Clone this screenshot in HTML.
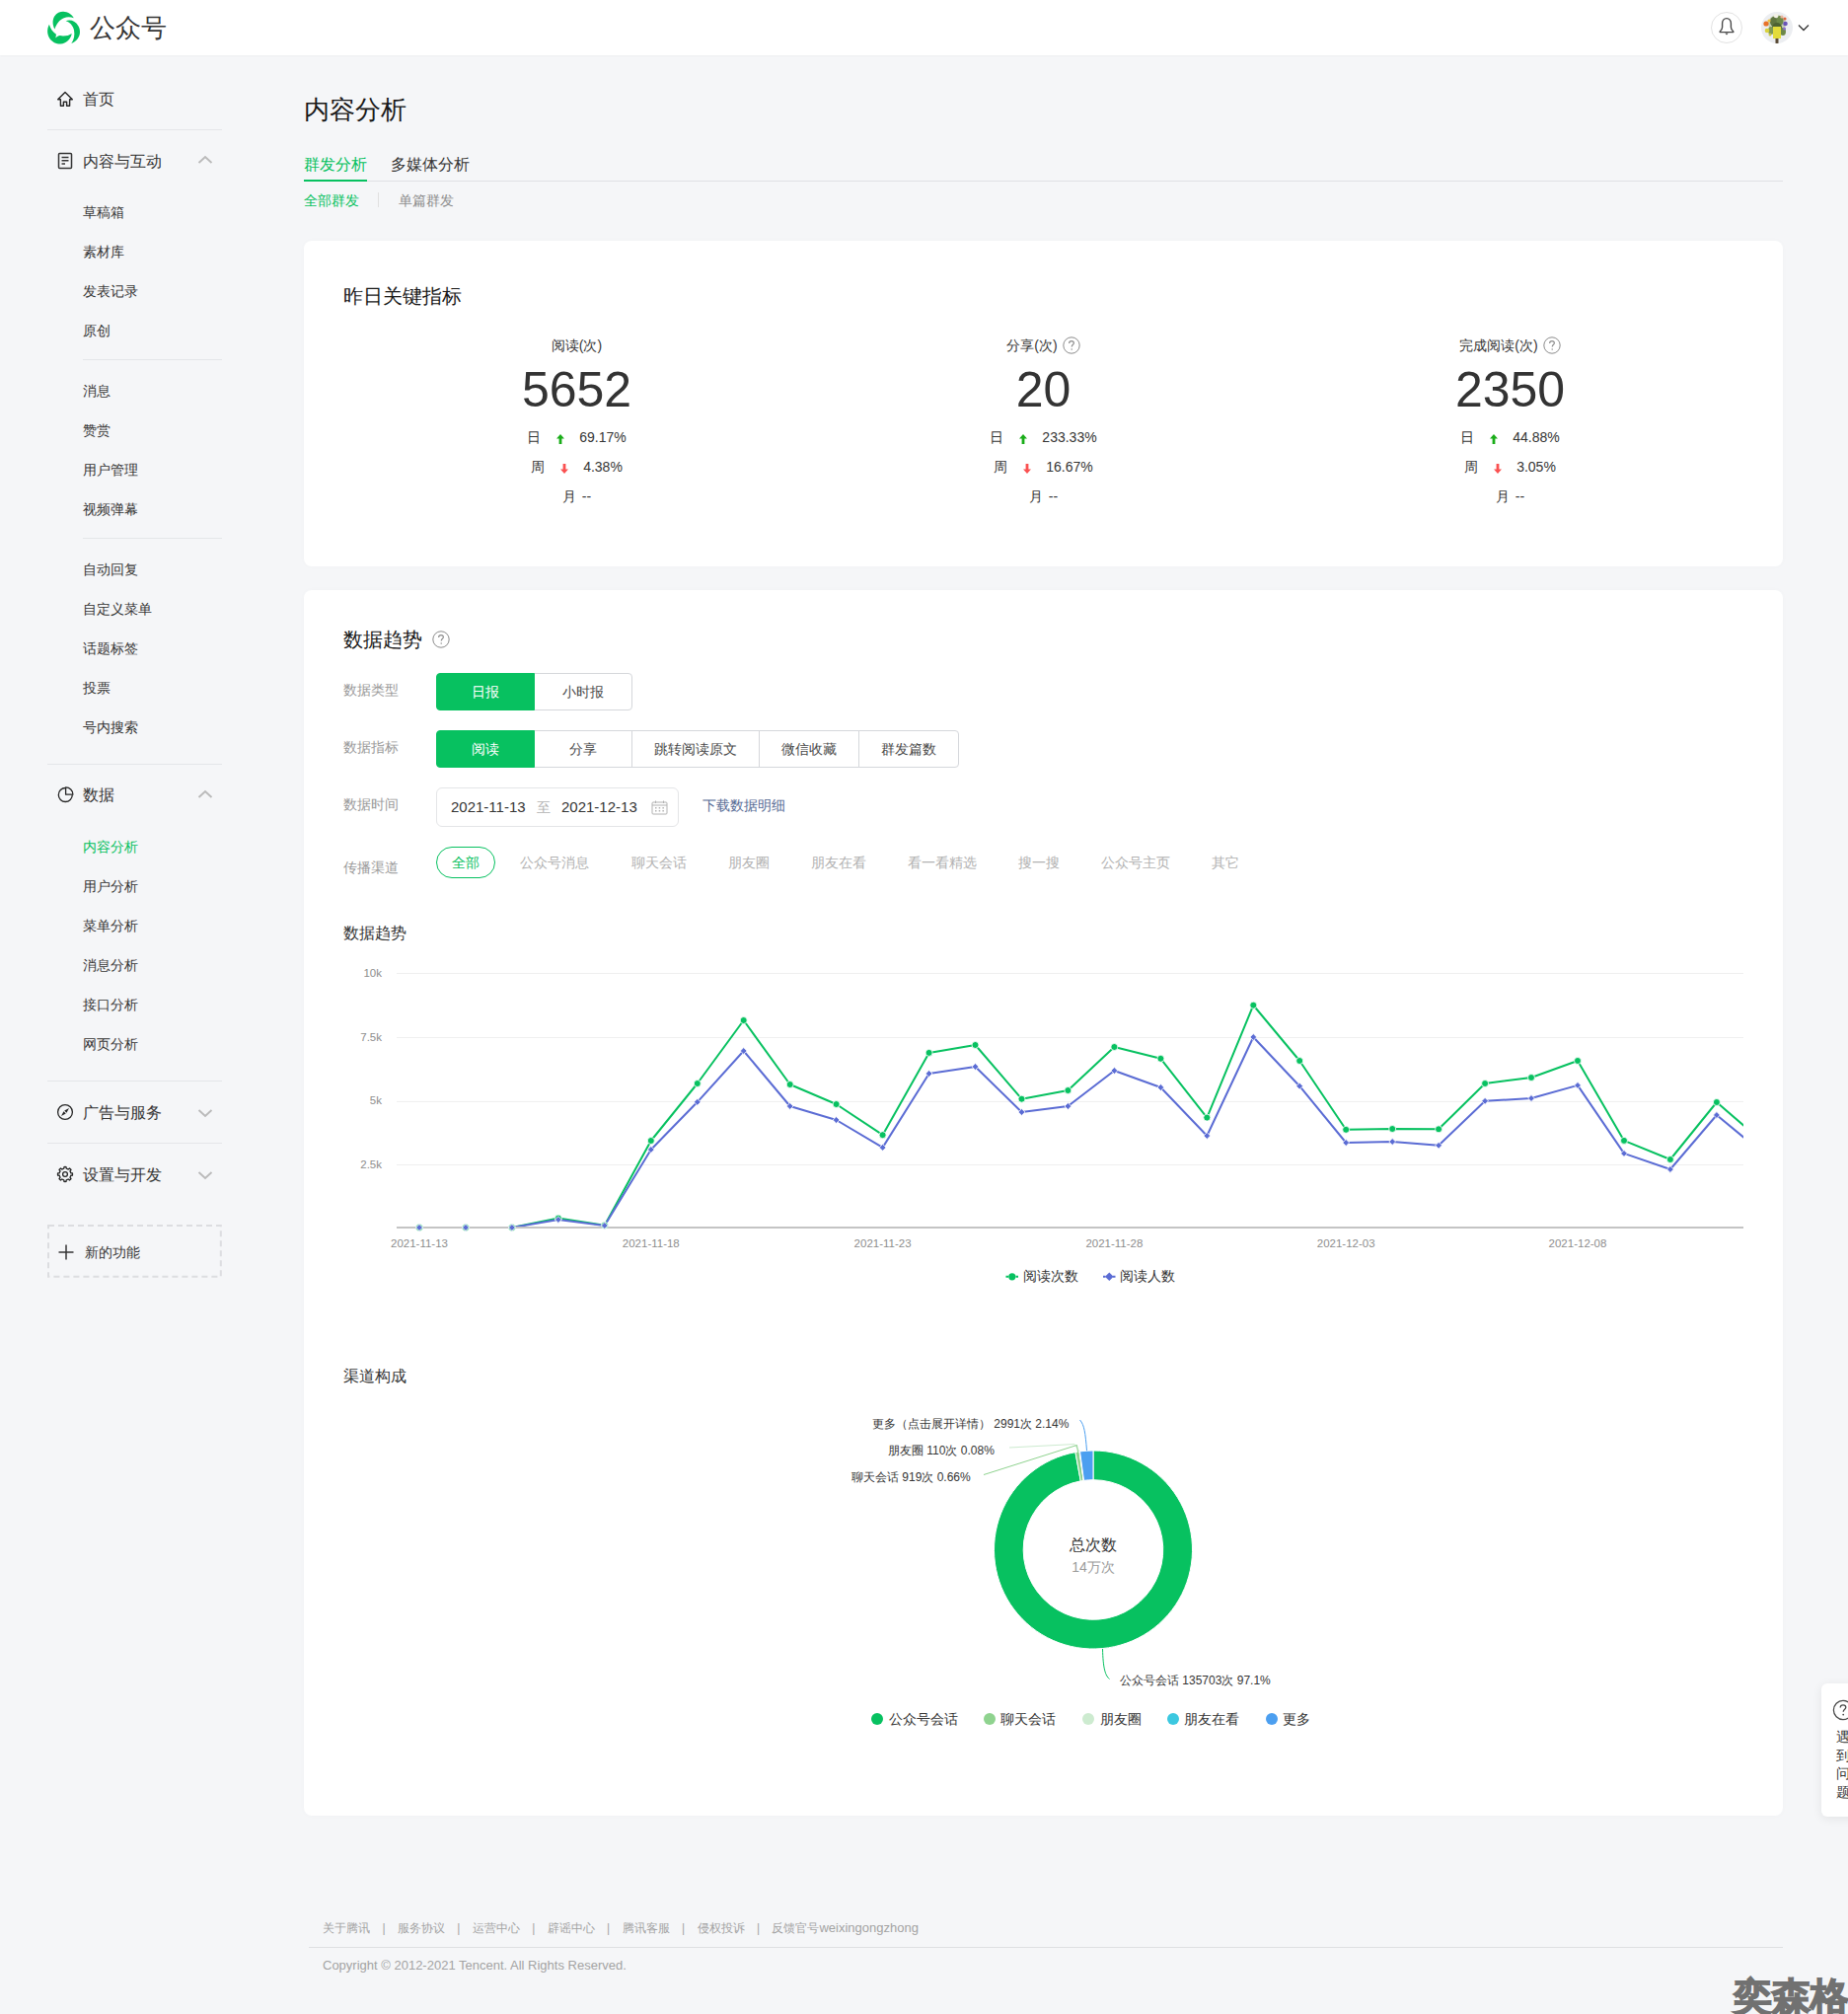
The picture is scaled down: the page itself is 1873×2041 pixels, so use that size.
<!DOCTYPE html>
<html><head><meta charset="utf-8">
<style>
*{box-sizing:border-box;margin:0;padding:0}
html,body{width:1873px;height:2041px;overflow:hidden}
body{position:relative;background:#f5f6f8;font-family:"Liberation Sans",sans-serif;color:#353535}
.abs{position:absolute}
.hdr{position:absolute;left:0;top:0;width:1873px;height:56px;background:#fff;box-shadow:0 1px 2px rgba(0,0,0,0.03)}
.t{position:absolute;white-space:nowrap;line-height:1}
.side .it{position:absolute;left:84px;font-size:14px;color:#353535;white-space:nowrap;line-height:20px}
.side .grp{position:absolute;left:84px;font-size:16px;color:#353535;white-space:nowrap;line-height:20px}
.side .dv{position:absolute;height:1px;background:#e4e6e9}
.card{position:absolute;left:308px;width:1499px;background:#fff;border-radius:8px;box-shadow:0 0 6px rgba(0,0,0,0.02)}

.mcol{position:absolute;top:0;width:473px;text-align:center}
.mlab{position:absolute;left:0;width:473px;top:340px;font-size:14px;line-height:20px;color:#353535;text-align:center;white-space:nowrap}
.mnum{position:absolute;left:0;width:473px;top:365px;font-size:50px;line-height:60px;color:#333;text-align:center}
.mrow{position:absolute;left:0;width:473px;font-size:14px;line-height:20px;color:#353535;display:flex;justify-content:center;align-items:center;white-space:nowrap}
.qi{display:inline-block;vertical-align:middle}
.up,.dn{display:inline-block;width:8px;height:10px;margin:0 15px 0 16px;position:relative;top:2px}

.lbl{position:absolute;left:348px;font-size:14px;line-height:20px;color:#9a9a9a;white-space:nowrap}
.bg{position:absolute;left:442px;height:38px;display:flex;font-size:14px;color:#4a4a4a}
.bg div{height:38px;line-height:36px;text-align:center;border:1px solid #d5d7db;margin-left:-1px;background:#fff}
.bg div:first-child{margin-left:0;border-radius:4px 0 0 4px}
.bg div:last-child{border-radius:0 4px 4px 0}
.bg div.on{background:#07c160;border-color:#07c160;color:#fff;position:relative;z-index:1}
.ch{position:absolute;top:864px;font-size:14px;line-height:20px;color:#b2b2b2;white-space:nowrap}
</style></head><body>

<div class="hdr">
 <svg class="abs" style="left:46px;top:10px" width="38" height="36" viewBox="0 0 38 36"><g fill="#07c160">
<path d="M9.46 19.5 C7.3 15.5 6.8 10.5 9.2 6.5 C11.5 3.2 15 1.8 18.1 1.85 C22.5 1.9 26.5 4.3 28.8 8.2 C25.5 7.2 22 7.0 18.8 8.2 C14.5 9.8 11.2 14 9.46 19.5 Z"/>
<path d="M20.6 11.3 C25 9.5 30.5 11 33.5 16.5 C35.8 20.5 35.5 26 32.5 29.5 C30.8 31.8 28.6 33.3 26.3 33.9 C29 30.5 30 25.5 29 20.5 C28 16 24.8 12.5 20.6 11.3 Z"/>
<path d="M3.9 14.8 C1.6 19 1.5 24.5 4.2 28.8 C7 33 11 34.6 15.4 34.5 C21 34.3 25.8 30 26.7 24.1 C24.5 25.8 21.5 26.6 18 26.6 C16.8 26.6 15.8 26.2 14.8 26.1 C13.2 26.4 11.8 27.3 10.3 28.4 C10.6 27 11 25.6 10.9 24.7 C7.5 22.5 5 19 3.9 14.8 Z"/>
</g></svg>
 <div class="t" style="left:91px;top:15px;font-size:26px;line-height:26px;color:#353535">公众号</div>
 <div class="abs" style="left:1734px;top:12px;width:32px;height:32px;border:1px solid #e2e2e2;border-radius:50%"></div>
 <svg class="abs" style="left:1742px;top:17px" width="16" height="20" viewBox="0 0 16 20"><path d="M8 1.6 C5.2 1.6 3.6 3.9 3.6 6.8 L3.6 10.6 C3.6 12.3 2.6 13.7 1.2 15 L1.2 15.6 L14.8 15.6 L14.8 15 C13.4 13.7 12.4 12.3 12.4 10.6 L12.4 6.8 C12.4 3.9 10.8 1.6 8 1.6 Z" fill="none" stroke="#4a4a4a" stroke-width="1.4" stroke-linejoin="round"/><path d="M6.3 16.4 L9.7 16.4 L8 18.4 Z" fill="#4a4a4a"/></svg>
 <svg class="abs" style="left:1785px;top:12px" width="32" height="32" viewBox="0 0 32 32">
<defs><clipPath id="av"><circle cx="16" cy="16" r="16"/></clipPath><filter id="bl"><feGaussianBlur stdDeviation="0.6"/></filter></defs>
<g clip-path="url(#av)"><rect width="32" height="32" fill="#eceef1"/>
<g filter="url(#bl)">
<ellipse cx="16" cy="12" rx="9" ry="9" fill="#a9b98a" opacity="0.6"/>
<ellipse cx="13" cy="10" rx="4" ry="5" fill="#5f7440"/>
<ellipse cx="19" cy="9" rx="3.5" ry="5" fill="#6e8a4a"/>
<ellipse cx="16" cy="16" rx="5" ry="5" fill="#4d6232"/>
<ellipse cx="10" cy="19" rx="3" ry="4" fill="#7f9a55"/>
<ellipse cx="22" cy="20" rx="3" ry="4" fill="#6d8848"/>
<circle cx="15" cy="4" r="2.2" fill="#f3f1e6"/>
<circle cx="21" cy="5" r="1.6" fill="#e9b6a0"/>
<circle cx="5" cy="12" r="2.6" fill="#e8722a"/>
<circle cx="8" cy="9" r="1.6" fill="#f0c040"/>
<circle cx="24.5" cy="12" r="2.3" fill="#6b55b8"/>
<circle cx="23.5" cy="17" r="1.5" fill="#8c6fd0"/>
<circle cx="24" cy="7" r="1.6" fill="#e0643c"/>
<circle cx="6" cy="19" r="2.3" fill="#d9d23c"/>
<circle cx="9" cy="23" r="1.5" fill="#c8c640"/>
</g>
<rect x="12" y="15" width="8" height="12" fill="#e3dc3a"/>
<rect x="14.5" y="27" width="3" height="5" fill="#5a4a34"/>
</g></svg>
<svg class="abs" style="left:1822px;top:24px" width="12" height="8" viewBox="0 0 12 8"><path d="M1 1.5 L6 6.5 L11 1.5" fill="none" stroke="#353535" stroke-width="1.3"/></svg>
</div>

<div class="side">
<svg class="abs" style="left:57px;top:92px" width="18" height="17" viewBox="0 0 18 17"><path d="M9 1.5 L16.3 8.7 L13.6 8.7 L13.6 15.2 L10.6 15.2 L10.6 11.3 L7.4 11.3 L7.4 15.2 L4.4 15.2 L4.4 8.7 L1.7 8.7 Z" fill="none" stroke="#262626" stroke-width="1.4" stroke-linejoin="round"/></svg>
<div class="grp" style="top:90.5px">首页</div>
<div class="dv" style="top:131px;left:48px;width:177px"></div>
<svg class="abs" style="left:58px;top:154px" width="16" height="18" viewBox="0 0 16 18"><rect x="1.5" y="1.5" width="13" height="15" rx="1" fill="none" stroke="#353535" stroke-width="1.5"/><path d="M4.5 5.5 H11.5 M4.5 8.8 H11.5 M4.5 12 H8" stroke="#353535" stroke-width="1.5"/></svg>
<div class="grp" style="top:153.5px">内容与互动</div>
<svg class="abs" style="left:200px;top:157px" width="16" height="10" viewBox="0 0 16 10"><path d="M1.5 8 L8 2 L14.5 8" fill="none" stroke="#bababa" stroke-width="1.9"/></svg>
<div class="it" style="top:205px;color:#353535">草稿箱</div>
<div class="it" style="top:245px;color:#353535">素材库</div>
<div class="it" style="top:285px;color:#353535">发表记录</div>
<div class="it" style="top:325px;color:#353535">原创</div>
<div class="dv" style="top:364px;left:84px;width:141px"></div>
<div class="it" style="top:386px;color:#353535">消息</div>
<div class="it" style="top:426px;color:#353535">赞赏</div>
<div class="it" style="top:466px;color:#353535">用户管理</div>
<div class="it" style="top:506px;color:#353535">视频弹幕</div>
<div class="dv" style="top:545px;left:84px;width:141px"></div>
<div class="it" style="top:567px;color:#353535">自动回复</div>
<div class="it" style="top:607px;color:#353535">自定义菜单</div>
<div class="it" style="top:647px;color:#353535">话题标签</div>
<div class="it" style="top:687px;color:#353535">投票</div>
<div class="it" style="top:727px;color:#353535">号内搜索</div>
<div class="dv" style="top:774px;left:48px;width:177px"></div>
<svg class="abs" style="left:57px;top:796px" width="18" height="18" viewBox="0 0 18 18"><path d="M9.3 2.5 A7 7 0 1 0 16.3 9.5" fill="none" stroke="#262626" stroke-width="1.3"/><path d="M9.6 1.9 V9.2 H16.9 A7.3 7.3 0 0 0 9.6 1.9 Z" fill="none" stroke="#262626" stroke-width="1.3" stroke-linejoin="round"/></svg>
<div class="grp" style="top:796px">数据</div>
<svg class="abs" style="left:200px;top:800px" width="16" height="10" viewBox="0 0 16 10"><path d="M1.5 8 L8 2 L14.5 8" fill="none" stroke="#bababa" stroke-width="1.9"/></svg>
<div class="it" style="top:848px;color:#07c160">内容分析</div>
<div class="it" style="top:888px;color:#353535">用户分析</div>
<div class="it" style="top:928px;color:#353535">菜单分析</div>
<div class="it" style="top:968px;color:#353535">消息分析</div>
<div class="it" style="top:1008px;color:#353535">接口分析</div>
<div class="it" style="top:1048px;color:#353535">网页分析</div>
<div class="dv" style="top:1095px;left:48px;width:177px"></div>
<svg class="abs" style="left:57px;top:1118px" width="18" height="18" viewBox="0 0 18 18"><circle cx="9" cy="9" r="7.4" fill="none" stroke="#262626" stroke-width="1.3"/><path d="M13 5 L10.48 9.78 L8.22 7.52 Z M5 13 L9.78 10.48 L7.52 8.22 Z" fill="#262626"/></svg>
<div class="grp" style="top:1117.5px">广告与服务</div>
<svg class="abs" style="left:200px;top:1122.5px" width="16" height="10" viewBox="0 0 16 10"><path d="M1.5 2 L8 8 L14.5 2" fill="none" stroke="#bababa" stroke-width="1.9"/></svg>
<div class="dv" style="top:1158px;left:48px;width:177px"></div>
<svg class="abs" style="left:57px;top:1181px" width="18" height="18" viewBox="0 0 18 18"><path d="M6.74 3.55 A5.9 5.9 0 0 1 7.77 3.23 L7.96 1.57 A7.5 7.5 0 0 1 10.04 1.57 L10.23 3.23 A5.9 5.9 0 0 1 11.26 3.55 A5.9 5.9 0 0 1 12.21 4.05 L13.51 3.01 A7.5 7.5 0 0 1 14.99 4.49 L13.95 5.79 A5.9 5.9 0 0 1 14.45 6.74 A5.9 5.9 0 0 1 14.77 7.77 L16.43 7.96 A7.5 7.5 0 0 1 16.43 10.04 L14.77 10.23 A5.9 5.9 0 0 1 14.45 11.26 A5.9 5.9 0 0 1 13.95 12.21 L14.99 13.51 A7.5 7.5 0 0 1 13.51 14.99 L12.21 13.95 A5.9 5.9 0 0 1 11.26 14.45 A5.9 5.9 0 0 1 10.23 14.77 L10.04 16.43 A7.5 7.5 0 0 1 7.96 16.43 L7.77 14.77 A5.9 5.9 0 0 1 6.74 14.45 A5.9 5.9 0 0 1 5.79 13.95 L4.49 14.99 A7.5 7.5 0 0 1 3.01 13.51 L4.05 12.21 A5.9 5.9 0 0 1 3.55 11.26 A5.9 5.9 0 0 1 3.23 10.23 L1.57 10.04 A7.5 7.5 0 0 1 1.57 7.96 L3.23 7.77 A5.9 5.9 0 0 1 3.55 6.74 A5.9 5.9 0 0 1 4.05 5.79 L3.01 4.49 A7.5 7.5 0 0 1 4.49 3.01 L5.79 4.05 A5.9 5.9 0 0 1 6.74 3.55 Z" fill="none" stroke="#262626" stroke-width="1.3" stroke-linejoin="round"/><circle cx="9" cy="9" r="2.4" fill="none" stroke="#262626" stroke-width="1.3"/></svg>
<div class="grp" style="top:1180.7px">设置与开发</div>
<svg class="abs" style="left:200px;top:1185.7px" width="16" height="10" viewBox="0 0 16 10"><path d="M1.5 2 L8 8 L14.5 2" fill="none" stroke="#bababa" stroke-width="1.9"/></svg>
<svg class="abs" style="left:46px;top:1239px" width="182" height="60" viewBox="46 1239 182 60"><rect x="49" y="1242" width="174.8" height="51.8" fill="none" stroke="#dcdde0" stroke-width="2" stroke-dasharray="6 4"/></svg>
<svg class="abs" style="left:59px;top:1261px" width="16" height="16" viewBox="0 0 16 16"><path d="M8 0.5 V15.5 M0.5 8 H15.5" stroke="#353535" stroke-width="1.5"/></svg>
<div class="it" style="top:1259px;left:86px">新的功能</div>
</div>
<div class="t" style="left:308px;top:96px;font-size:26px;line-height:30px;color:#191919">内容分析</div>
<div class="abs" style="left:308px;top:183px;width:1499px;height:1px;background:#dfe1e4"></div>
<div class="t" style="left:308px;top:157px;font-size:16px;line-height:20px;color:#07c160">群发分析</div>
<div class="abs" style="left:308px;top:182px;width:64px;height:2px;background:#07c160"></div>
<div class="t" style="left:396px;top:157px;font-size:16px;line-height:20px;color:#353535">多媒体分析</div>
<div class="t" style="left:308px;top:193px;font-size:14px;line-height:20px;color:#07c160">全部群发</div>
<div class="abs" style="left:383px;top:195px;width:1px;height:15px;background:#e0e0e0"></div>
<div class="t" style="left:404px;top:193px;font-size:14px;line-height:20px;color:#8d8d8d">单篇群发</div>
<div class="card" style="top:244px;height:330px"></div>
<div class="t" style="left:348px;top:288px;font-size:20px;line-height:24px;color:#191919">昨日关键指标</div>
<div class="abs" style="left:348px;top:0;width:473px;height:600px">
<div class="mlab">阅读(次)</div>
<div class="mnum">5652</div>
<div class="mrow" style="top:433px"><span>日</span><svg class="up" viewBox="0 0 8 10"><path d="M4 0 L8 4.5 L5.4 4.5 L5.4 10 L2.6 10 L2.6 4.5 L0 4.5 Z" fill="#1aad19"/></svg><span>69.17%</span></div>
<div class="mrow" style="top:463px"><span>周</span><svg class="dn" viewBox="0 0 8 10"><path d="M4 10 L8 5.5 L5.4 5.5 L5.4 0 L2.6 0 L2.6 5.5 L0 5.5 Z" fill="#fa5151"/></svg><span>4.38%</span></div>
<div class="mrow" style="top:493px"><span>月</span><span style="margin-left:6px">--</span></div>
</div>
<div class="abs" style="left:821px;top:0;width:473px;height:600px">
<div class="mlab">分享(次)<svg class="qi" width="18" height="18" viewBox="0 0 18 18" style="margin-left:5px;margin-top:-2px"><circle cx="9" cy="9" r="8.2" fill="none" stroke="#8c8c8c" stroke-width="1"/><path d="M6.6 6.9 C6.6 5.5 7.6 4.6 9 4.6 C10.4 4.6 11.4 5.5 11.4 6.7 C11.4 8.2 9.2 8.4 9.2 10.4" fill="none" stroke="#8c8c8c" stroke-width="1.1"/><circle cx="9.2" cy="12.9" r="0.75" fill="#8c8c8c"/></svg></div>
<div class="mnum">20</div>
<div class="mrow" style="top:433px"><span>日</span><svg class="up" viewBox="0 0 8 10"><path d="M4 0 L8 4.5 L5.4 4.5 L5.4 10 L2.6 10 L2.6 4.5 L0 4.5 Z" fill="#1aad19"/></svg><span>233.33%</span></div>
<div class="mrow" style="top:463px"><span>周</span><svg class="dn" viewBox="0 0 8 10"><path d="M4 10 L8 5.5 L5.4 5.5 L5.4 0 L2.6 0 L2.6 5.5 L0 5.5 Z" fill="#fa5151"/></svg><span>16.67%</span></div>
<div class="mrow" style="top:493px"><span>月</span><span style="margin-left:6px">--</span></div>
</div>
<div class="abs" style="left:1294px;top:0;width:473px;height:600px">
<div class="mlab">完成阅读(次)<svg class="qi" width="18" height="18" viewBox="0 0 18 18" style="margin-left:5px;margin-top:-2px"><circle cx="9" cy="9" r="8.2" fill="none" stroke="#8c8c8c" stroke-width="1"/><path d="M6.6 6.9 C6.6 5.5 7.6 4.6 9 4.6 C10.4 4.6 11.4 5.5 11.4 6.7 C11.4 8.2 9.2 8.4 9.2 10.4" fill="none" stroke="#8c8c8c" stroke-width="1.1"/><circle cx="9.2" cy="12.9" r="0.75" fill="#8c8c8c"/></svg></div>
<div class="mnum">2350</div>
<div class="mrow" style="top:433px"><span>日</span><svg class="up" viewBox="0 0 8 10"><path d="M4 0 L8 4.5 L5.4 4.5 L5.4 10 L2.6 10 L2.6 4.5 L0 4.5 Z" fill="#1aad19"/></svg><span>44.88%</span></div>
<div class="mrow" style="top:463px"><span>周</span><svg class="dn" viewBox="0 0 8 10"><path d="M4 10 L8 5.5 L5.4 5.5 L5.4 0 L2.6 0 L2.6 5.5 L0 5.5 Z" fill="#fa5151"/></svg><span>3.05%</span></div>
<div class="mrow" style="top:493px"><span>月</span><span style="margin-left:6px">--</span></div>
</div>
<div class="card" style="top:598px;height:1242px"></div>
<div class="t" style="left:348px;top:636px;font-size:20px;line-height:24px;color:#191919">数据趋势</div>
<svg class="abs" style="left:438px;top:639px" width="18" height="18" viewBox="0 0 18 18"><circle cx="9" cy="9" r="8.2" fill="none" stroke="#8c8c8c" stroke-width="1"/><path d="M6.6 6.9 C6.6 5.5 7.6 4.6 9 4.6 C10.4 4.6 11.4 5.5 11.4 6.7 C11.4 8.2 9.2 8.4 9.2 10.4" fill="none" stroke="#8c8c8c" stroke-width="1.1"/><circle cx="9.2" cy="12.9" r="0.75" fill="#8c8c8c"/></svg>
<div class="lbl" style="top:689px">数据类型</div>
<div class="bg" style="top:682px"><div class="on" style="width:100px">日报</div><div style="width:100px">小时报</div></div>
<div class="lbl" style="top:747px">数据指标</div>
<div class="bg" style="top:740px"><div class="on" style="width:100px">阅读</div><div style="width:100px">分享</div><div style="width:130px">跳转阅读原文</div><div style="width:102px">微信收藏</div><div style="width:102px">群发篇数</div></div>
<div class="lbl" style="top:805px">数据时间</div>
<div class="abs" style="left:442px;top:798px;width:246px;height:40px;border:1px solid #e4e5e7;border-radius:6px"></div>
<div class="t" style="left:457px;top:808px;font-size:15px;line-height:20px;color:#353535">2021-11-13</div>
<div class="t" style="left:544px;top:808px;font-size:14px;line-height:20px;color:#b2b2b2">至</div>
<div class="t" style="left:569px;top:808px;font-size:15px;line-height:20px;color:#353535">2021-12-13</div>
<svg class="abs" style="left:660px;top:811px" width="17" height="15" viewBox="0 0 17 15"><rect x="1" y="2" width="15" height="12" rx="1" fill="none" stroke="#b2b2b2" stroke-width="1"/><path d="M1 5 H16" stroke="#b2b2b2" stroke-width="1"/><path d="M4.5 0.5 V3 M12.5 0.5 V3" stroke="#b2b2b2" stroke-width="1"/><g fill="#b2b2b2"><rect x="4" y="7" width="1.5" height="1.5"/><rect x="7.7" y="7" width="1.5" height="1.5"/><rect x="11.4" y="7" width="1.5" height="1.5"/><rect x="4" y="10" width="1.5" height="1.5"/><rect x="7.7" y="10" width="1.5" height="1.5"/><rect x="11.4" y="10" width="1.5" height="1.5"/></g></svg>
<div class="t" style="left:712px;top:806px;font-size:14px;line-height:20px;color:#576b95">下载数据明细</div>
<div class="lbl" style="top:869px">传播渠道</div>
<div class="abs" style="left:442px;top:858px;width:60px;height:32px;border:1px solid #07c160;border-radius:16px;color:#07c160;font-size:14px;line-height:30px;text-align:center">全部</div>
<div class="ch" style="left:527px">公众号消息</div>
<div class="ch" style="left:640px">聊天会话</div>
<div class="ch" style="left:737.5px">朋友圈</div>
<div class="ch" style="left:821.6px">朋友在看</div>
<div class="ch" style="left:920px">看一看精选</div>
<div class="ch" style="left:1032px">搜一搜</div>
<div class="ch" style="left:1116px">公众号主页</div>
<div class="ch" style="left:1228px">其它</div>
<div class="t" style="left:348px;top:936px;font-size:16px;line-height:20px;color:#353535">数据趋势</div>
<svg class="abs" style="left:330px;top:960px" width="1460" height="350" viewBox="330 960 1460 350"><defs><clipPath id="cp"><rect x="401" y="970" width="1366" height="290"/></clipPath></defs><line x1="402" y1="986.5" x2="1767" y2="986.5" stroke="#efefef" stroke-width="1"/><line x1="402" y1="1051.5" x2="1767" y2="1051.5" stroke="#efefef" stroke-width="1"/><line x1="402" y1="1116.4" x2="1767" y2="1116.4" stroke="#efefef" stroke-width="1"/><line x1="402" y1="1180.5" x2="1767" y2="1180.5" stroke="#efefef" stroke-width="1"/><text x="387" y="989.5" text-anchor="end" font-size="11.5" fill="#8d8d8d" font-family="Liberation Sans">10k</text><text x="387" y="1054.5" text-anchor="end" font-size="11.5" fill="#8d8d8d" font-family="Liberation Sans">7.5k</text><text x="387" y="1119.4" text-anchor="end" font-size="11.5" fill="#8d8d8d" font-family="Liberation Sans">5k</text><text x="387" y="1183.5" text-anchor="end" font-size="11.5" fill="#8d8d8d" font-family="Liberation Sans">2.5k</text><text x="425.0" y="1264" text-anchor="middle" font-size="11.5" fill="#8d8d8d" font-family="Liberation Sans">2021-11-13</text><text x="659.8" y="1264" text-anchor="middle" font-size="11.5" fill="#8d8d8d" font-family="Liberation Sans">2021-11-18</text><text x="894.6" y="1264" text-anchor="middle" font-size="11.5" fill="#8d8d8d" font-family="Liberation Sans">2021-11-23</text><text x="1129.4" y="1264" text-anchor="middle" font-size="11.5" fill="#8d8d8d" font-family="Liberation Sans">2021-11-28</text><text x="1364.2" y="1264" text-anchor="middle" font-size="11.5" fill="#8d8d8d" font-family="Liberation Sans">2021-12-03</text><text x="1599.0" y="1264" text-anchor="middle" font-size="11.5" fill="#8d8d8d" font-family="Liberation Sans">2021-12-08</text><g clip-path="url(#cp)"><polyline points="425.0,1244.0 472.0,1244.0 518.9,1244.0 565.9,1234.6 612.8,1241.7 659.8,1156.0 706.8,1098.0 753.7,1034.0 800.7,1099.0 847.6,1119.0 894.6,1150.2 941.6,1066.9 988.5,1059.0 1035.5,1113.7 1082.4,1105.0 1129.4,1061.0 1176.4,1072.8 1223.3,1132.6 1270.3,1018.7 1317.2,1075.0 1364.2,1144.8 1411.2,1144.0 1458.1,1144.3 1505.1,1098.0 1552.0,1092.0 1599.0,1075.0 1646.0,1155.9 1692.9,1175.0 1739.9,1117.0 1786.8,1157.5" fill="none" stroke="#07c160" stroke-width="2" stroke-linejoin="round"/><polyline points="425.0,1244.0 472.0,1244.0 518.9,1244.0 565.9,1236.0 612.8,1242.0 659.8,1165.0 706.8,1116.8 753.7,1065.0 800.7,1121.0 847.6,1135.0 894.6,1162.9 941.6,1088.0 988.5,1081.0 1035.5,1127.0 1082.4,1121.0 1129.4,1085.0 1176.4,1102.0 1223.3,1151.0 1270.3,1051.0 1317.2,1100.7 1364.2,1158.0 1411.2,1157.0 1458.1,1160.8 1505.1,1115.8 1552.0,1113.0 1599.0,1099.9 1646.0,1168.9 1692.9,1185.0 1739.9,1130.0 1786.8,1168.7" fill="none" stroke="#5b6cd4" stroke-width="2" stroke-linejoin="round"/><line x1="402" y1="1244" x2="1767" y2="1244" stroke="#c4c4c4" stroke-width="2"/><circle cx="425.0" cy="1244.0" r="3.5" fill="#07c160" stroke="#fff" stroke-width="0.8"/><circle cx="472.0" cy="1244.0" r="3.5" fill="#07c160" stroke="#fff" stroke-width="0.8"/><circle cx="518.9" cy="1244.0" r="3.5" fill="#07c160" stroke="#fff" stroke-width="0.8"/><circle cx="565.9" cy="1234.6" r="3.5" fill="#07c160" stroke="#fff" stroke-width="0.8"/><circle cx="612.8" cy="1241.7" r="3.5" fill="#07c160" stroke="#fff" stroke-width="0.8"/><circle cx="659.8" cy="1156.0" r="3.5" fill="#07c160" stroke="#fff" stroke-width="0.8"/><circle cx="706.8" cy="1098.0" r="3.5" fill="#07c160" stroke="#fff" stroke-width="0.8"/><circle cx="753.7" cy="1034.0" r="3.5" fill="#07c160" stroke="#fff" stroke-width="0.8"/><circle cx="800.7" cy="1099.0" r="3.5" fill="#07c160" stroke="#fff" stroke-width="0.8"/><circle cx="847.6" cy="1119.0" r="3.5" fill="#07c160" stroke="#fff" stroke-width="0.8"/><circle cx="894.6" cy="1150.2" r="3.5" fill="#07c160" stroke="#fff" stroke-width="0.8"/><circle cx="941.6" cy="1066.9" r="3.5" fill="#07c160" stroke="#fff" stroke-width="0.8"/><circle cx="988.5" cy="1059.0" r="3.5" fill="#07c160" stroke="#fff" stroke-width="0.8"/><circle cx="1035.5" cy="1113.7" r="3.5" fill="#07c160" stroke="#fff" stroke-width="0.8"/><circle cx="1082.4" cy="1105.0" r="3.5" fill="#07c160" stroke="#fff" stroke-width="0.8"/><circle cx="1129.4" cy="1061.0" r="3.5" fill="#07c160" stroke="#fff" stroke-width="0.8"/><circle cx="1176.4" cy="1072.8" r="3.5" fill="#07c160" stroke="#fff" stroke-width="0.8"/><circle cx="1223.3" cy="1132.6" r="3.5" fill="#07c160" stroke="#fff" stroke-width="0.8"/><circle cx="1270.3" cy="1018.7" r="3.5" fill="#07c160" stroke="#fff" stroke-width="0.8"/><circle cx="1317.2" cy="1075.0" r="3.5" fill="#07c160" stroke="#fff" stroke-width="0.8"/><circle cx="1364.2" cy="1144.8" r="3.5" fill="#07c160" stroke="#fff" stroke-width="0.8"/><circle cx="1411.2" cy="1144.0" r="3.5" fill="#07c160" stroke="#fff" stroke-width="0.8"/><circle cx="1458.1" cy="1144.3" r="3.5" fill="#07c160" stroke="#fff" stroke-width="0.8"/><circle cx="1505.1" cy="1098.0" r="3.5" fill="#07c160" stroke="#fff" stroke-width="0.8"/><circle cx="1552.0" cy="1092.0" r="3.5" fill="#07c160" stroke="#fff" stroke-width="0.8"/><circle cx="1599.0" cy="1075.0" r="3.5" fill="#07c160" stroke="#fff" stroke-width="0.8"/><circle cx="1646.0" cy="1155.9" r="3.5" fill="#07c160" stroke="#fff" stroke-width="0.8"/><circle cx="1692.9" cy="1175.0" r="3.5" fill="#07c160" stroke="#fff" stroke-width="0.8"/><circle cx="1739.9" cy="1117.0" r="3.5" fill="#07c160" stroke="#fff" stroke-width="0.8"/><circle cx="1786.8" cy="1157.5" r="3.5" fill="#07c160" stroke="#fff" stroke-width="0.8"/><path d="M425.0 1240.6 L428.4 1244.0 L425.0 1247.4 L421.6 1244.0 Z" fill="#5b6cd4" stroke="#fff" stroke-width="0.8"/><path d="M472.0 1240.6 L475.4 1244.0 L472.0 1247.4 L468.6 1244.0 Z" fill="#5b6cd4" stroke="#fff" stroke-width="0.8"/><path d="M518.9 1240.6 L522.3 1244.0 L518.9 1247.4 L515.5 1244.0 Z" fill="#5b6cd4" stroke="#fff" stroke-width="0.8"/><path d="M565.9 1232.6 L569.3 1236.0 L565.9 1239.4 L562.5 1236.0 Z" fill="#5b6cd4" stroke="#fff" stroke-width="0.8"/><path d="M612.8 1238.6 L616.2 1242.0 L612.8 1245.4 L609.4 1242.0 Z" fill="#5b6cd4" stroke="#fff" stroke-width="0.8"/><path d="M659.8 1161.6 L663.2 1165.0 L659.8 1168.4 L656.4 1165.0 Z" fill="#5b6cd4" stroke="#fff" stroke-width="0.8"/><path d="M706.8 1113.4 L710.2 1116.8 L706.8 1120.2 L703.4 1116.8 Z" fill="#5b6cd4" stroke="#fff" stroke-width="0.8"/><path d="M753.7 1061.6 L757.1 1065.0 L753.7 1068.4 L750.3 1065.0 Z" fill="#5b6cd4" stroke="#fff" stroke-width="0.8"/><path d="M800.7 1117.6 L804.1 1121.0 L800.7 1124.4 L797.3 1121.0 Z" fill="#5b6cd4" stroke="#fff" stroke-width="0.8"/><path d="M847.6 1131.6 L851.0 1135.0 L847.6 1138.4 L844.2 1135.0 Z" fill="#5b6cd4" stroke="#fff" stroke-width="0.8"/><path d="M894.6 1159.5 L898.0 1162.9 L894.6 1166.3 L891.2 1162.9 Z" fill="#5b6cd4" stroke="#fff" stroke-width="0.8"/><path d="M941.6 1084.6 L945.0 1088.0 L941.6 1091.4 L938.2 1088.0 Z" fill="#5b6cd4" stroke="#fff" stroke-width="0.8"/><path d="M988.5 1077.6 L991.9 1081.0 L988.5 1084.4 L985.1 1081.0 Z" fill="#5b6cd4" stroke="#fff" stroke-width="0.8"/><path d="M1035.5 1123.6 L1038.9 1127.0 L1035.5 1130.4 L1032.1 1127.0 Z" fill="#5b6cd4" stroke="#fff" stroke-width="0.8"/><path d="M1082.4 1117.6 L1085.8 1121.0 L1082.4 1124.4 L1079.0 1121.0 Z" fill="#5b6cd4" stroke="#fff" stroke-width="0.8"/><path d="M1129.4 1081.6 L1132.8 1085.0 L1129.4 1088.4 L1126.0 1085.0 Z" fill="#5b6cd4" stroke="#fff" stroke-width="0.8"/><path d="M1176.4 1098.6 L1179.8 1102.0 L1176.4 1105.4 L1173.0 1102.0 Z" fill="#5b6cd4" stroke="#fff" stroke-width="0.8"/><path d="M1223.3 1147.6 L1226.7 1151.0 L1223.3 1154.4 L1219.9 1151.0 Z" fill="#5b6cd4" stroke="#fff" stroke-width="0.8"/><path d="M1270.3 1047.6 L1273.7 1051.0 L1270.3 1054.4 L1266.9 1051.0 Z" fill="#5b6cd4" stroke="#fff" stroke-width="0.8"/><path d="M1317.2 1097.3 L1320.6 1100.7 L1317.2 1104.1 L1313.8 1100.7 Z" fill="#5b6cd4" stroke="#fff" stroke-width="0.8"/><path d="M1364.2 1154.6 L1367.6 1158.0 L1364.2 1161.4 L1360.8 1158.0 Z" fill="#5b6cd4" stroke="#fff" stroke-width="0.8"/><path d="M1411.2 1153.6 L1414.6 1157.0 L1411.2 1160.4 L1407.8 1157.0 Z" fill="#5b6cd4" stroke="#fff" stroke-width="0.8"/><path d="M1458.1 1157.4 L1461.5 1160.8 L1458.1 1164.2 L1454.7 1160.8 Z" fill="#5b6cd4" stroke="#fff" stroke-width="0.8"/><path d="M1505.1 1112.4 L1508.5 1115.8 L1505.1 1119.2 L1501.7 1115.8 Z" fill="#5b6cd4" stroke="#fff" stroke-width="0.8"/><path d="M1552.0 1109.6 L1555.4 1113.0 L1552.0 1116.4 L1548.6 1113.0 Z" fill="#5b6cd4" stroke="#fff" stroke-width="0.8"/><path d="M1599.0 1096.5 L1602.4 1099.9 L1599.0 1103.3 L1595.6 1099.9 Z" fill="#5b6cd4" stroke="#fff" stroke-width="0.8"/><path d="M1646.0 1165.5 L1649.4 1168.9 L1646.0 1172.3 L1642.6 1168.9 Z" fill="#5b6cd4" stroke="#fff" stroke-width="0.8"/><path d="M1692.9 1181.6 L1696.3 1185.0 L1692.9 1188.4 L1689.5 1185.0 Z" fill="#5b6cd4" stroke="#fff" stroke-width="0.8"/><path d="M1739.9 1126.6 L1743.3 1130.0 L1739.9 1133.4 L1736.5 1130.0 Z" fill="#5b6cd4" stroke="#fff" stroke-width="0.8"/><path d="M1786.8 1165.3 L1790.2 1168.7 L1786.8 1172.1 L1783.4 1168.7 Z" fill="#5b6cd4" stroke="#fff" stroke-width="0.8"/></g><line x1="1019.5" y1="1293.8" x2="1032" y2="1293.8" stroke="#07c160" stroke-width="2" stroke-dasharray="2.5 7.5"/><circle cx="1025.8" cy="1293.8" r="3.6" fill="#07c160"/><line x1="1118" y1="1293.8" x2="1130.6" y2="1293.8" stroke="#5b6cd4" stroke-width="2" stroke-dasharray="2.5 7.5"/><path d="M1124.3 1289.5 L1128.6 1293.8 L1124.3 1298.1 L1120 1293.8 Z" fill="#5b6cd4"/></svg>
<div class="t" style="left:1037px;top:1283px;font-size:14px;line-height:20px;color:#353535">阅读次数</div>
<div class="t" style="left:1135px;top:1283px;font-size:14px;line-height:20px;color:#353535">阅读人数</div>
<div class="t" style="left:348px;top:1385px;font-size:16px;line-height:20px;color:#353535">渠道构成</div>
<svg class="abs" style="left:830px;top:1400px" width="520" height="320" viewBox="830 1400 520 320"><path d="M1108.00 1470.00 A100.5 100.5 0 1 1 1089.93 1471.64 L1095.27 1500.85 A70.8 70.8 0 1 0 1108.00 1499.70 Z" fill="#07c160" stroke="#fff" stroke-width="1"/><path d="M1089.93 1471.64 A100.5 100.5 0 0 1 1094.03 1470.98 L1098.16 1500.39 A70.8 70.8 0 0 0 1095.27 1500.85 Z" fill="#8fd38f" stroke="#fff" stroke-width="1"/><path d="M1094.03 1470.98 A100.5 100.5 0 0 1 1094.52 1470.91 L1098.51 1500.34 A70.8 70.8 0 0 0 1098.16 1500.39 Z" fill="#cdebd0" stroke="#fff" stroke-width="1"/><path d="M1094.52 1470.91 A100.5 100.5 0 0 1 1108.00 1470.00 L1108.00 1499.70 A70.8 70.8 0 0 0 1098.51 1500.34 Z" fill="#4c9ff0" stroke="#fff" stroke-width="1"/><path d="M1101.5 1470 C1100 1452 1099 1444 1094.5 1439" fill="none" stroke="#4c9ff0" stroke-width="1"/><path d="M1094 1471 L1089 1463.5 L1023 1467" fill="none" stroke="#cdebd0" stroke-width="1"/><path d="M1096.5 1500 L1091.5 1464.5 L997 1494.5" fill="none" stroke="#8fd38f" stroke-width="1"/><path d="M1117.5 1671 C1118 1690 1120 1698 1124.5 1701.5" fill="none" stroke="#07c160" stroke-width="1"/></svg>
<div class="t" style="left:884px;top:1435px;font-size:12px;line-height:16px;color:#353535">更多（点击展开详情） 2991次 2.14%</div>
<div class="t" style="left:900px;top:1461.5px;font-size:12px;line-height:16px;color:#353535">朋友圈 110次 0.08%</div>
<div class="t" style="left:863px;top:1488.5px;font-size:12px;line-height:16px;color:#353535">聊天会话 919次 0.66%</div>
<div class="t" style="left:1135px;top:1695px;font-size:12px;line-height:16px;color:#353535">公众号会话 135703次 97.1%</div>
<div class="t" style="left:1058px;top:1556px;width:100px;text-align:center;font-size:16px;line-height:20px;color:#353535">总次数</div>
<div class="t" style="left:1058px;top:1578px;width:100px;text-align:center;font-size:14px;line-height:20px;color:#9a9a9a">14万次</div>
<div class="abs" style="left:883px;top:1735.6px;width:12px;height:12px;border-radius:50%;background:#07c160"></div>
<div class="t" style="left:900.5px;top:1731.5px;font-size:14px;line-height:20px;color:#353535">公众号会话</div>
<div class="abs" style="left:996.8px;top:1735.6px;width:12px;height:12px;border-radius:50%;background:#8fd38f"></div>
<div class="t" style="left:1014.3px;top:1731.5px;font-size:14px;line-height:20px;color:#353535">聊天会话</div>
<div class="abs" style="left:1097px;top:1735.6px;width:12px;height:12px;border-radius:50%;background:#cdebd0"></div>
<div class="t" style="left:1114.5px;top:1731.5px;font-size:14px;line-height:20px;color:#353535">朋友圈</div>
<div class="abs" style="left:1182.5px;top:1735.6px;width:12px;height:12px;border-radius:50%;background:#3cc8e0"></div>
<div class="t" style="left:1200.0px;top:1731.5px;font-size:14px;line-height:20px;color:#353535">朋友在看</div>
<div class="abs" style="left:1282.5px;top:1735.6px;width:12px;height:12px;border-radius:50%;background:#4c9ff0"></div>
<div class="t" style="left:1300.0px;top:1731.5px;font-size:14px;line-height:20px;color:#353535">更多</div>
<div class="t" style="left:327px;top:1944px;font-size:12px;line-height:20px;color:#a3a3a3">关于腾讯<span style="margin:0 12.4px">|</span>服务协议<span style="margin:0 12.4px">|</span>运营中心<span style="margin:0 12.4px">|</span>辟谣中心<span style="margin:0 12.4px">|</span>腾讯客服<span style="margin:0 12.4px">|</span>侵权投诉<span style="margin:0 12.4px">|</span>反馈官号<span style="font-size:13px">weixingongzhong</span></div>
<div class="abs" style="left:313px;top:1973px;width:1494px;height:1px;background:#dedfe1"></div>
<div class="t" style="left:327px;top:1982px;font-size:13px;line-height:20px;color:#a3a3a3">Copyright © 2012-2021 Tencent. All Rights Reserved.</div>
<div class="abs" style="left:1846px;top:1706px;width:60px;height:135px;background:#fff;border-radius:6px;box-shadow:0 2px 10px rgba(0,0,0,0.08)"></div>
<svg class="abs" style="left:1857px;top:1722px" width="22" height="22" viewBox="0 0 22 22"><circle cx="11" cy="11" r="9.6" fill="none" stroke="#4a4a4a" stroke-width="1.3"/><path d="M8.2 8.6 C8.2 6.9 9.4 5.9 11 5.9 C12.6 5.9 13.8 6.9 13.8 8.3 C13.8 10.1 11.2 10.4 11.2 12.7" fill="none" stroke="#4a4a4a" stroke-width="1.3"/><circle cx="11.2" cy="15.6" r="0.9" fill="#4a4a4a"/></svg>
<div class="t" style="left:1861px;top:1750.0px;font-size:14px;line-height:20px;color:#353535">遇</div>
<div class="t" style="left:1861px;top:1768.6px;font-size:14px;line-height:20px;color:#353535">到</div>
<div class="t" style="left:1861px;top:1787.2px;font-size:14px;line-height:20px;color:#353535">问</div>
<div class="t" style="left:1861px;top:1805.8px;font-size:14px;line-height:20px;color:#353535">题</div>
<div class="t" style="left:1757px;top:2000px;font-size:39px;line-height:48px;font-weight:900;color:#717171;-webkit-text-stroke:1.6px #717171">奕森格</div>
</body></html>
